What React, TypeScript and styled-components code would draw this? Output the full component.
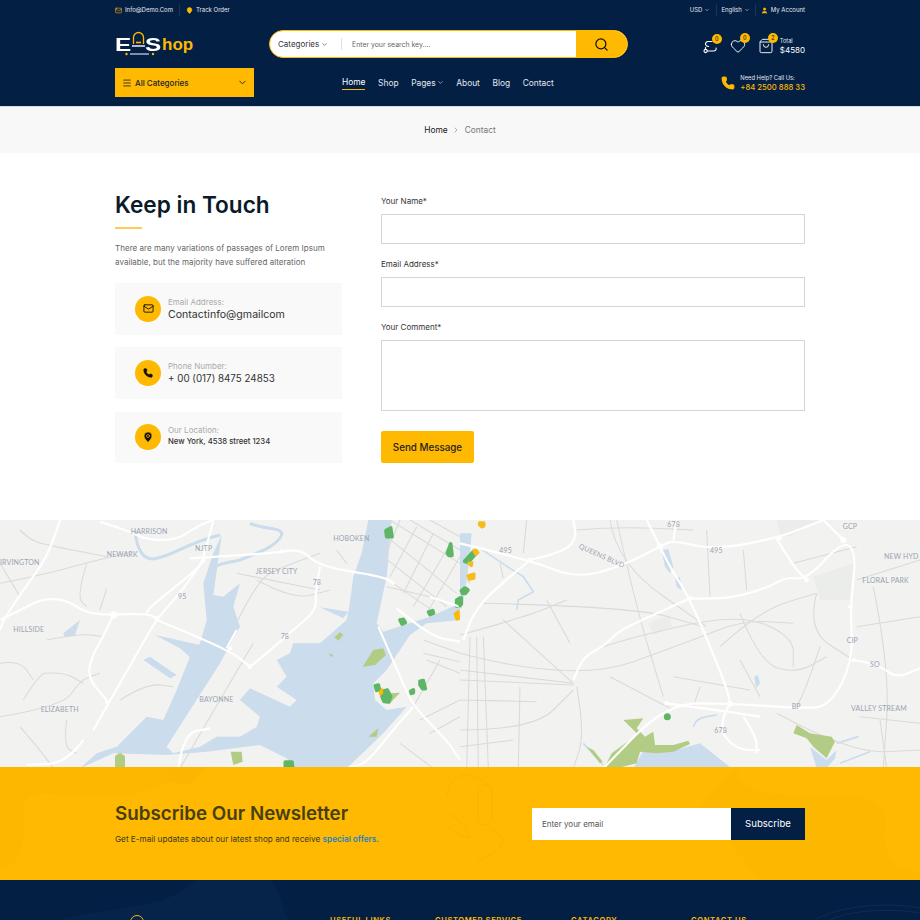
import { FC } from "react";
import styled, { createGlobalStyle } from "styled-components";
import { ChevronDown, ChevronRight, Heart, Mail, MapPin, Menu, Phone, Search, ShoppingBag, User } from "lucide-react";

const FONT = "Inter, 'Noto Sans', sans-serif";
const NAVY = "#031f44";
const YELLOW = "#ffb900";

const GlobalStyle = createGlobalStyle`
  html, body {
    margin: 0;
    padding: 0;
    height: 920px;
    overflow: hidden;
    background: #fff;
    font-family: ${FONT};
  }
  * {
    box-sizing: border-box;
  }
`;

// rounds the corners of a traced road so it doesn't look like a polyline
const smooth = (d: string) =>
  d
    .split("M")
    .filter(Boolean)
    .map((part) => {
      const pts = part.split("L").map((p) => p.trim().split(/\s+/).map(Number));
      if (pts.length < 3) return `M${part}`;
      let out = `M${pts[0][0]} ${pts[0][1]}`;
      for (let i = 1; i < pts.length - 1; i++) {
        const mx = (pts[i][0] + pts[i + 1][0]) / 2;
        const my = (pts[i][1] + pts[i + 1][1]) / 2;
        out += `Q${pts[i][0]} ${pts[i][1]} ${mx} ${my}`;
      }
      const last = pts[pts.length - 1];
      return `${out}L${last[0]} ${last[1]}`;
    })
    .join("");

// traced from the map, coordinates are 3x so the groups below are scaled down
const westWater = [
  "M1105 0L1175 0L1160 170L1130 310L1150 335L1290 290L1380 250L1380 300L1280 310L1230 345L1160 450L1120 490L1125 540L1160 570L1220 560L1150 640L1040 745L240 745L290 700L350 680L440 590L490 600L530 510L570 410L600 370L620 300L610 190L640 100L665 45L640 225L670 230L720 190L700 260L720 320L660 430L500 680L520 700L600 680L650 650L720 650L770 620L780 590L720 540L750 505L870 560L890 540L830 500L860 470L830 420L870 400L880 370L960 370L1040 300L1048 260L1060 170L1085 100Z",
  "M465 345L600 375L570 412L540 385Z",
  "M430 420L450 410L530 465L510 475Z",
  "M190 340L240 300L225 345L195 352Z",
  "M960 262L1045 275L1030 295Z",
];
const westLand = "M240 745L340 700L500 705L620 695L780 675L860 715L885 745Z";
const westRivers = [
  "M405 30C410 90 430 125 470 115C520 105 560 70 660 45",
  "M750 10C790 30 850 20 845 45C830 80 770 100 720 120C680 130 650 130 635 150",
];
const westParks = [
  "M1088 440L1120 390L1150 385L1158 405L1125 435Z",
  "M1003 352L1020 337L1030 345L1015 362Z",
  "M345 745L345 708L360 698L375 708L375 745Z",
  "M692 695L725 695L728 725L700 735Z",
  "M1105 650L1135 625L1130 650Z",
  "M1165 520L1200 518L1170 550Z",
  "M985 400L1000 405L995 412Z",
];
const westGreens = [
  "M1158 32L1172 24L1176 50L1160 50Z",
  "M1342 100L1352 72L1356 106L1346 106Z",
  "M1200 300L1210 298L1216 308L1206 312Z",
  "M1286 276L1298 272L1300 280L1290 284Z",
  "M1126 497L1135 495L1138 508L1130 511Z",
  "M1150 514L1162 510L1172 530L1166 546L1152 544L1146 530Z",
  "M1232 514L1240 510L1240 518L1234 520Z",
  "M1260 484L1270 482L1276 506L1268 506L1260 494Z",
  "M856 726L876 726L878 745L856 745Z",
  "M1370 240L1380 234L1380 258L1370 258Z",
];
const westRoads = [
  "M180 0L150 100L70 210L10 300L0 330",
  "M0 300L60 270L130 235L200 240L260 280L340 285L440 280L470 295",
  "M300 5L380 30L440 60L530 60L590 20L640 0",
  "M640 0L610 120L590 150L450 260L440 280",
  "M610 120L550 210L470 295L400 420L320 560L280 630",
  "M570 115L830 100L900 85L960 140L1150 170L1180 190",
  "M960 140L945 220L950 270L880 330L800 400L750 440",
  "M470 300L680 385L750 440",
  "M680 385L710 330",
  "M340 285L310 350L280 400L260 470L320 540",
  "M1135 320L1200 470L1240 560L1340 660L1380 720",
  "M1240 560L1170 640L1100 730L1040 745",
  "M250 660L200 730L80 735",
  "M535 745L550 640L630 625",
  "M1190 265L1290 350L1380 365",
  "M1290 230L1380 260",
];
const westStreets = [
  "M0 190L130 165L270 125L400 95",
  "M60 30L90 60L140 75L320 110",
  "M0 130L30 180L60 230",
  "M260 130L230 230L260 260",
  "M320 205L300 270",
  "M140 360L240 340L310 350",
  "M0 590L190 560L240 480L300 460",
  "M130 460L190 455L250 490",
  "M70 540L100 490L130 460",
  "M60 620L120 690L160 745",
  "M360 540L440 490L520 500",
  "M200 600L190 680L230 700",
  "M0 430L60 420L100 480",
  "M700 330L770 180L850 140L960 100",
  "M770 180L880 240L990 210",
  "M710 160L960 210",
  "M540 745L700 470L760 370",
  "M1010 90L1040 130",
  "M1170 0L1380 130",
  "M1230 0L1380 90",
  "M1290 0L1380 50",
  "M1160 50L1370 220",
  "M1150 110L1340 260",
  "M1150 170L1310 280",
  "M1200 0L1150 120",
  "M1250 20L1170 170",
  "M1300 40L1210 220",
  "M1345 80L1240 260",
  "M1380 110L1280 280",
  "M1160 200L1290 230",
  "M1270 360L1380 400",
  "M1280 420L1380 460",
  "M1270 400L1380 425",
  "M1320 420L1240 560",
  "M1260 600L1380 540",
  "M1290 640L1380 590",
  "M1200 670L1300 745",
];
const westJunctions = [
  [340, 285, 11], [470, 295, 8], [610, 122, 7], [750, 440, 7], [690, 385, 6], [845, 92, 5], [320, 545, 6], [1180, 190, 5],
];
const eastWater = [
  "M0 40L35 40L30 100L20 180L5 265L0 265Z",
  "M605 90L625 88L640 140L630 160L615 140Z",
  "M645 170L660 172L665 210L650 200Z",
  "M883 470L893 465L900 490L888 505Z",
  "M520 745L550 692L640 692L720 670L815 745Z",
  "M1050 680L1100 720L1130 690L1125 715L1100 745L1070 745Z",
];
const eastRivers = [
  "M60 85L150 145L190 170L220 215L175 240L170 270",
  "M700 620C710 590 740 590 770 585",
  "M1130 670L1195 650",
  "M1140 730L1230 695",
  "M370 670L430 735",
];
const eastParks = [
  "M490 600L550 595L530 625L555 650L580 635L585 675L640 675L685 662L690 672L640 695L590 700L540 695L530 730L470 745L432 745L455 700L510 660L530 640Z",
  "M1000 640L1010 615L1050 640L1115 650L1125 665L1100 715L1060 680L1040 655Z",
  "M380 680L400 690L428 725L420 730Z",
];
const eastGreens = [
  "M14 124L40 95L46 102L24 128Z",
  "M4 212L15 204L24 210L16 220L8 220Z",
  "M0 236L4 234L4 252L0 256Z",
  "M617 590A5 5 0 1 0 627 590A5 5 0 1 0 617 590Z",
];
const eastAmber = [
  "M58 8L72 8L72 18L65 21L58 14Z",
  "M41 92L47 89L54 98L48 103Z",
  "M24 167L42 162L42 175L28 178Z",
  "M26 130L36 128L34 137Z",
];
const eastRoads = [
  "M0 70L210 120L350 175L480 140L600 80L640 60L760 90L950 55L1090 0",
  "M210 120L100 210L40 280L10 360",
  "M210 120L300 100L350 60L340 0",
  "M560 0L600 80L640 160L690 235L800 500L810 550",
  "M640 60L650 0",
  "M690 235L790 240L920 205L980 170L1040 180L1150 60L1190 100L1170 260L1180 420L1110 560L1020 565L810 550L620 550L430 745",
  "M950 55L1000 140L1040 180",
  "M1150 60L1090 0",
  "M690 235L570 290L480 330L430 380L370 410L340 480",
  "M1180 420L1250 430L1310 475L1380 445",
  "M810 550L770 620L830 690L900 690",
  "M850 590L890 650L890 700",
  "M620 550L770 570L900 590",
];
const eastStreets = [
  "M470 0L525 250L610 530",
  "M0 400L340 490L700 360L850 300L1000 310",
  "M0 450L340 490",
  "M0 480L340 495",
  "M70 250L520 260L730 320",
  "M0 345L200 290L320 240",
  "M130 300L340 490",
  "M260 240L330 370",
  "M430 380L520 350L840 280L1000 350L1000 440",
  "M450 470L640 570",
  "M640 470L870 510",
  "M840 280L900 430L1010 460L1100 410",
  "M780 380L900 270L1070 220",
  "M1080 380L1040 500L1010 560",
  "M1070 220L1040 330L1180 420",
  "M1000 130L1190 80",
  "M1190 320L1380 290",
  "M1200 590L1380 610",
  "M1190 180L1380 120",
  "M30 350L20 745",
  "M50 350L55 745",
  "M70 350L85 745",
  "M0 630L220 630L340 510",
  "M0 680L160 660",
  "M180 500L175 745",
  "M350 500L375 640L340 745",
  "M1260 600L1280 745",
  "M0 540L230 545",
  "M950 580L1170 700L1380 690",
  "M450 0L470 130L740 320",
  "M350 30L470 20L700 30",
  "M200 0L190 100",
  "M0 150L30 190M120 130L130 175",
  "M740 30L750 230",
  "M850 90L860 210",
  "M1240 200L1290 450L1270 745",
  "M720 500L700 560",
  "M840 420L900 530",
];
const eastBlocks = [
  "M565 310L630 285L635 320L580 345Z",
  "M1060 170L1180 130L1170 240L1080 240Z",
  "M950 0L1090 0L985 50L960 45Z",
];
const eastJunctions = [
  [210, 120, 7], [600, 78, 9], [690, 235, 7], [1150, 60, 9], [1040, 180, 7], [960, 55, 6], [810, 552, 9], [620, 550, 7], [1180, 420, 6], [1170, 260, 6],
];

const Roads: FC<{ items: string[]; junctions: number[][] }> = ({ items, junctions }) => (
  <>
    {items.map((d) => <path key={d} d={smooth(d)} fill="none" stroke="#fff" strokeWidth="6.5" strokeLinejoin="round" />)}
    {junctions.map(([x, y, r]) => <circle key={`${x}-${y}`} cx={x} cy={y} r={r} fill="#fff" />)}
  </>
);

const Streets: FC<{ items: string[] }> = ({ items }) => (
  <>
    {items.map((d) => <path key={d} d={smooth(d)} fill="none" stroke="#dadada" strokeWidth="3.2" />)}
  </>
);

const MapArt: FC = () => (
  <MapSvg viewBox="0 0 920 248" preserveAspectRatio="none">
    <defs>
      <filter id="soft" x="0" y="0" width="100%" height="100%">
        <feGaussianBlur stdDeviation="0.35" />
      </filter>
    </defs>
    <rect width="920" height="248" fill="#f2f2f1" />
    <g filter="url(#soft)">
      <g transform="scale(.33333)">
        {westWater.map((d) => <path key={d} d={d} fill="#cbdcec" />)}
        <path d={westLand} fill="#f2f2f1" />
        {westRivers.map((d) => <path key={d} d={d} fill="none" stroke="#cbdcec" strokeWidth="9" />)}
        <Streets items={westStreets} />
        {westParks.map((d) => <path key={d} d={d} fill="#b3cc85" />)}
        {westGreens.map((d) => <path key={d} d={d} fill="#5fb566" stroke="#5fb566" strokeWidth="11" strokeLinejoin="round" />)}
        <path d="M1135 515L1148 502L1150 520L1140 528Z" fill={YELLOW} />
        <path d="M1360 280L1378 268L1380 300L1368 302Z" fill={YELLOW} />
        <Roads items={westRoads} junctions={westJunctions} />
      </g>
      <g transform="translate(460 0) scale(.33333)">
        {eastBlocks.map((d) => <path key={d} d={d} fill="#ebedea" />)}
        {eastWater.map((d) => <path key={d} d={d} fill="#cbdcec" />)}
        {eastRivers.map((d) => <path key={d} d={d} fill="none" stroke="#cbdcec" strokeWidth="5" />)}
        <Streets items={eastStreets} />
        {eastParks.map((d) => <path key={d} d={d} fill="#b3cc85" />)}
        {eastGreens.map((d) => <path key={d} d={d} fill="#5fb566" stroke="#5fb566" strokeWidth="11" strokeLinejoin="round" />)}
        {eastAmber.map((d) => <path key={d} d={d} fill="#f5bd1f" stroke="#f5bd1f" strokeWidth="9" strokeLinejoin="round" />)}
        <Roads items={eastRoads} junctions={eastJunctions} />
      </g>
    </g>
    <g transform="scale(.33333)">
      <MapLabel x="392" y="42">HARRISON</MapLabel>
      <MapLabel x="320" y="112">NEWARK</MapLabel>
      <MapLabel x="585" y="93">NJTP</MapLabel>
      <MapLabel x="0" y="134">IRVINGTON</MapLabel>
      <MapLabel x="1000" y="62">HOBOKEN</MapLabel>
      <MapLabel x="767" y="161">JERSEY CITY</MapLabel>
      <MapLabel x="40" y="336">HILLSIDE</MapLabel>
      <MapLabel x="598" y="546">BAYONNE</MapLabel>
      <MapLabel x="122" y="576">ELIZABETH</MapLabel>
      <MapLabel x="534" y="236">95</MapLabel>
      <MapLabel x="938" y="196">78</MapLabel>
      <MapLabel x="842" y="358">78</MapLabel>
    </g>
    <g transform="translate(460 0) scale(.33333)">
      <MapLabel x="622" y="20">678</MapLabel>
      <MapLabel x="118" y="100">495</MapLabel>
      <MapLabel x="750" y="98">495</MapLabel>
      <MapLabel x="1148" y="26">GCP</MapLabel>
      <MapLabel x="1272" y="116">NEW HYD</MapLabel>
      <MapLabel x="1207" y="190">FLORAL PARK</MapLabel>
      <MapLabel x="1160" y="370">CIP</MapLabel>
      <MapLabel x="1230" y="440">SO</MapLabel>
      <MapLabel x="995" y="566">BP</MapLabel>
      <MapLabel x="1173" y="574">VALLEY STREAM</MapLabel>
      <MapLabel x="763" y="640">678</MapLabel>
      <MapLabel x="355" y="84" transform="rotate(24 355 84)">QUEENS BLVD</MapLabel>
    </g>
  </MapSvg>
);

const CompareIcon: FC = () => (
  <svg width="15" height="15" viewBox="0 0 15 15" fill="none" stroke="#fff" strokeWidth="1.1" strokeLinecap="round">
    <circle cx="2.6" cy="12" r="1.6" />
    <path d="M4.3 12h6.2c2 0 3-1.4 2.6-3" />
    <path d="M9 2.5H5.2C3.4 2.5 2.2 4 2.6 5.6c.3 1.3 1.6 1.9 3 1.9" />
    <path d="M2.5 8.5v1.6" />
  </svg>
);

const LogoBell: FC = () => (
  <LogoBellSvg width="13" height="16" viewBox="0 0 13 16" fill="none">
    <path d="M1.5 13V6.5a5 5 0 0 1 10 0V13" stroke={YELLOW} strokeWidth="1.3" />
    <path d="M4 11.5h5" stroke={YELLOW} strokeWidth="1.6" />
    <path d="M0 15h13" stroke="#fff" strokeWidth="1.4" />
  </LogoBellSvg>
);

const LogoUnderline: FC = () => (
  <LogoUnderlineSvg width="30" height="4" viewBox="0 0 30 4">
    <circle cx="1.5" cy="2" r="1.2" fill={YELLOW} />
    <path d="M5 2h19" stroke="#fff" strokeWidth="1" />
    <circle cx="28" cy="2" r="1.2" fill={YELLOW} />
  </LogoUnderlineSvg>
);

const NewsletterArt: FC = () => (
  <NewsletterSvg viewBox="0 0 920 113" preserveAspectRatio="none">
    <path d="M0 100C30 100 22 60 24 40C26 20 50 28 90 30C140 34 185 10 190 0L0 0Z" fill="#fcb701" />
    <path d="M165 0C170 22 190 25 205 0Z" fill="#fab601" />
    <path d="M735 0C745 30 770 25 790 28C830 30 890 20 885 60C880 90 900 105 920 105L920 113L760 113L700 40Z" fill="#fcb701" />
    <g fill="none" stroke="#f3b006" strokeWidth=".7">
      <path d="M447 30C448 8 472 -2 488 20" />
      <path d="M478 24C480 16 490 16 492 24L492 52C490 60 480 60 478 52Z" />
      <path d="M447 46C455 48 468 62 470 70C462 72 450 62 447 58" />
      <path d="M490 62C500 65 506 72 500 80C494 88 482 88 477 97" />
    </g>
  </NewsletterSvg>
);

const infoCards = [
  { key: "mail", label: "Email Address:", value: "Contactinfo@gmailcom", size: 10.6, weight: 400 },
  { key: "phone", label: "Phone Number:", value: "+ 00 (017) 8475 24853", size: 9.8, weight: 400 },
  { key: "pin", label: "Our Location:", value: "New York, 4538 street 1234", size: 7.7, weight: 500 },
];

const footerHeads = [
  { title: "USEFUL LINKS", left: 215 },
  { title: "CUSTOMER SERVICE", left: 320 },
  { title: "CATAGORY", left: 456 },
  { title: "CONTACT US", left: 576 },
];

export default function App() {
  return (
    <Page>
      <GlobalStyle />
      <Header>
        <Container>
          <TopBar>
            <TopGroup $gap={6}>
              <TopItem><Mail size={7} color={YELLOW} />Info@Demo.Com</TopItem>
              <TopSep />
              <TopItem><MapPin size={7} color={NAVY} fill={YELLOW} stroke={YELLOW} />Track Order</TopItem>
            </TopGroup>
            <TopGroup $gap={4.5}>
              <TopItem>USD<ChevronDown size={6} /></TopItem>
              <TopSep />
              <TopItem>English<ChevronDown size={6} /></TopItem>
              <TopSep />
              <TopItem><User size={7} color={YELLOW} fill={YELLOW} />My Account</TopItem>
            </TopGroup>
          </TopBar>
          <MiddleRow>
            <Logo>
              <LogoLetter>E</LogoLetter>
              <LogoBell />
              <LogoLetter>S</LogoLetter>
              <LogoHop>hop</LogoHop>
              <LogoUnderline />
            </Logo>
            <SearchBar>
              <SearchCategory>Categories<ChevronDown size={7} /></SearchCategory>
              <SearchInput placeholder="Enter your search key...." />
              <SearchButton><Search size={15} color="#111" strokeWidth={2} /></SearchButton>
            </SearchBar>
            <HeaderIcons>
              <IconWrap><CompareIcon /><Badge>0</Badge></IconWrap>
              <IconWrap><Heart size={16} color="#fff" strokeWidth={1.4} /><Badge>0</Badge></IconWrap>
              <IconWrap><ShoppingBag size={16} color="#fff" strokeWidth={1.4} /><Badge>2</Badge></IconWrap>
              <CartTotal>
                <small>Total</small>
                <span>$4580</span>
              </CartTotal>
            </HeaderIcons>
          </MiddleRow>
          <BottomRow>
            <AllCategories>
              <Menu size={10} />
              <span>All Categories</span>
              <ChevronDown size={11} />
            </AllCategories>
            <Nav>
              <NavLink $active>Home</NavLink>
              <NavLink>Shop</NavLink>
              <NavLink>Pages<ChevronDown size={7} /></NavLink>
              <NavLink>About</NavLink>
              <NavLink>Blog</NavLink>
              <NavLink>Contact</NavLink>
            </Nav>
            <HelpBox>
              <Phone size={14} color={YELLOW} fill={YELLOW} />
              <HelpText>
                <small>Need Help? Call Us:</small>
                <span>+84 2500 888 33</span>
              </HelpText>
            </HelpBox>
          </BottomRow>
        </Container>
      </Header>

      <Breadcrumb>
        <CrumbHome>Home</CrumbHome>
        <ChevronRight size={8} color="#888" />
        <CrumbCurrent>Contact</CrumbCurrent>
      </Breadcrumb>

      <ContactSection>
        <ContactGrid>
          <div>
            <Title>Keep in Touch</Title>
            <TitleRule />
            <Intro>
              There are many variations of passages of Lorem Ipsum
              <br />
              available, but the majority have suffered alteration
            </Intro>
            <CardList>
              {infoCards.map((card) => (
                <InfoCard key={card.key}>
                  <InfoIcon>
                    {card.key === "mail" && <Mail size={11} color="#111" />}
                    {card.key === "phone" && <Phone size={10} color="#111" fill="#111" />}
                    {card.key === "pin" && <MapPin size={12} color={YELLOW} fill="#111" strokeWidth={1.4} />}
                  </InfoIcon>
                  <InfoText $small={card.size < 9}>
                    <InfoLabel>{card.label}</InfoLabel>
                    <InfoValue $size={card.size} $weight={card.weight}>{card.value}</InfoValue>
                  </InfoText>
                </InfoCard>
              ))}
            </CardList>
          </div>
          <Form>
            <FieldLabel>Your Name*</FieldLabel>
            <TextField />
            <FieldLabel>Email Address*</FieldLabel>
            <TextField />
            <FieldLabel>Your Comment*</FieldLabel>
            <CommentField />
            <SendButton type="button">Send Message</SendButton>
          </Form>
        </ContactGrid>
      </ContactSection>

      <MapSection>
        <MapArt />
      </MapSection>

      <Newsletter>
        <NewsletterArt />
        <NewsletterInner>
          <div>
            <NewsTitle>Subscribe Our Newsletter</NewsTitle>
            <NewsText>
              Get E-mail updates about our latest shop and receive <strong>special offers.</strong>
            </NewsText>
          </div>
          <NewsForm>
            <NewsInput placeholder="Enter your email" />
            <NewsButton type="button">Subscribe</NewsButton>
          </NewsForm>
        </NewsletterInner>
      </Newsletter>

      <Footer>
        <FooterWave viewBox="0 0 920 40" preserveAspectRatio="none">
          <path d="M60 40C110 25 170 30 195 0L270 0C285 15 280 30 290 40Z" fill="#0a2750" opacity=".5" />
          <g fill="none" stroke="#12305a" strokeWidth=".7">
            <path d="M815 40C840 25 890 22 920 28" />
            <path d="M830 40C850 30 890 28 920 33" />
          </g>
        </FooterWave>
        <FooterInner>
          <FooterLogoMark />
          {footerHeads.map((head) => (
            <FooterHead key={head.title} $left={head.left}>{head.title}</FooterHead>
          ))}
        </FooterInner>
      </Footer>
    </Page>
  );
}

const Page = styled.div`
  width: 920px;
  height: 920px;
  overflow: hidden;
  color: #222;
`;

const Container = styled.div`
  width: 690px;
  margin: 0 auto;
`;

const Header = styled.header`
  height: 107px;
  background: ${NAVY};
  border-bottom: 1px solid #d8dbe0;
`;

const TopBar = styled.div`
  display: flex;
  justify-content: space-between;
  align-items: center;
  height: 20px;
`;

const TopGroup = styled.div<{ $gap: number }>`
  display: flex;
  align-items: center;
  gap: ${(p) => p.$gap}px;
`;

const TopItem = styled.span`
  display: flex;
  align-items: center;
  gap: 2px;
  font-size: 6px;
  line-height: 8px;
  color: #e3e7ee;

  svg:first-child {
    margin-right: 1px;
  }
`;

const TopSep = styled.i`
  display: block;
  width: 1px;
  height: 12px;
  background: #17345c;
`;

const MiddleRow = styled.div`
  display: flex;
  align-items: center;
  height: 48px;
`;

const Logo = styled.div`
  position: relative;
  display: flex;
  align-items: flex-end;
  width: 154px;
  height: 28px;
  margin-top: -1px;
`;

const LogoBellSvg = styled.svg`
  flex: none;
  margin-bottom: 11px;
`;

const LogoUnderlineSvg = styled.svg`
  position: absolute;
  left: 10px;
  bottom: 2px;
`;

const LogoLetter = styled.span`
  font-family: "Liberation Sans", sans-serif;
  font-weight: 700;
  font-size: 18px;
  line-height: 18px;
  color: #fff;
  margin-bottom: 4px;
  transform: scaleX(1.35);
  transform-origin: left center;
  width: 17px;
`;

const LogoHop = styled.span`
  font-family: "Liberation Sans", sans-serif;
  font-weight: 700;
  font-size: 17px;
  line-height: 18px;
  color: ${YELLOW};
  margin-bottom: 4px;
`;

const SearchBar = styled.div`
  display: flex;
  align-items: stretch;
  width: 359px;
  height: 28px;
  background: #fff;
  border: 1px solid ${YELLOW};
  border-radius: 14px;
  overflow: hidden;
`;

const SearchCategory = styled.div`
  display: flex;
  align-items: center;
  gap: 2px;
  width: 72px;
  padding-left: 8px;
  font-size: 8px;
  color: #333;
  position: relative;

  &::after {
    content: "";
    position: absolute;
    right: 0;
    top: 7px;
    bottom: 7px;
    width: 1px;
    background: #dde0e4;
  }
`;

const SearchInput = styled.input`
  flex: 1;
  min-width: 0;
  border: 0;
  outline: none;
  padding: 0 0 0 10px;
  font-family: ${FONT};
  font-size: 6.9px;

  &::placeholder {
    color: #666;
  }
`;

const SearchButton = styled.div`
  display: flex;
  align-items: center;
  justify-content: center;
  width: 51px;
  background: ${YELLOW};
`;

const HeaderIcons = styled.div`
  display: flex;
  align-items: center;
  margin-left: auto;
  gap: 12px;
  margin-top: 4px;
`;

const IconWrap = styled.div`
  position: relative;
  display: flex;
`;

const Badge = styled.b`
  position: absolute;
  top: -5px;
  right: -4px;
  width: 10px;
  height: 10px;
  border-radius: 50%;
  background: ${YELLOW};
  font-size: 5.5px;
  font-weight: 500;
  line-height: 10px;
  text-align: center;
  color: #222;
`;

const CartTotal = styled.div`
  display: flex;
  flex-direction: column;
  margin-left: -6px;
  color: #fff;

  small {
    font-size: 5.6px;
    line-height: 8px;
    color: #e3e7ee;
  }

  span {
    font-size: 8px;
    line-height: 11px;
  }
`;

const BottomRow = styled.div`
  display: flex;
  align-items: center;
  height: 29px;
`;

const AllCategories = styled.div`
  display: flex;
  align-items: center;
  width: 139px;
  height: 29px;
  padding: 0 6px 0 7px;
  background: ${YELLOW};
  color: #222;
  font-size: 8px;
  font-weight: 500;

  span {
    flex: 1;
    margin-left: 3px;
  }
`;

const Nav = styled.nav`
  display: flex;
  align-items: center;
  gap: 12.6px;
  margin-left: 88px;
`;

const NavLink = styled.a<{ $active?: boolean }>`
  display: flex;
  align-items: center;
  gap: 1px;
  font-size: 8.4px;
  line-height: 12px;
  color: ${(p) => (p.$active ? "#fff" : "#e3e7ee")};
  padding-bottom: ${(p) => (p.$active ? "1px" : "0")};
  border-bottom: ${(p) => (p.$active ? `1px solid ${YELLOW}` : "0")};
`;

const HelpBox = styled.div`
  display: flex;
  align-items: center;
  gap: 5px;
  margin-left: auto;
`;

const HelpText = styled.div`
  display: flex;
  flex-direction: column;

  small {
    font-size: 5.8px;
    line-height: 9px;
    color: #e3e7ee;
  }

  span {
    font-size: 7.7px;
    line-height: 11px;
    font-weight: 500;
    color: ${YELLOW};
  }
`;

const Breadcrumb = styled.div`
  display: flex;
  align-items: center;
  justify-content: center;
  gap: 4.5px;
  height: 46px;
  background: #f8f8f8;
`;

const CrumbHome = styled.span`
  font-size: 8.4px;
  color: #222;
`;

const CrumbCurrent = styled.span`
  font-size: 8.4px;
  color: #777;
`;

const ContactSection = styled.section`
  height: 367px;
`;

const ContactGrid = styled(Container)`
  display: grid;
  grid-template-columns: 227px 424px;
  gap: 39px;
  padding-top: 38px;
`;

const Title = styled.h1`
  margin: 0;
  font-size: 22.6px;
  line-height: 28px;
  font-weight: 600;
  color: #0b1a2b;
`;

const TitleRule = styled.div`
  width: 27px;
  height: 1.5px;
  margin-top: 8px;
  background: #ffcb55;
`;

const Intro = styled.p`
  margin: 12px 0 14px;
  font-size: 8px;
  line-height: 14px;
  letter-spacing: 0.03px;
  color: #666;
`;

const CardList = styled.div`
  display: flex;
  flex-direction: column;
  gap: 12px;
`;

const InfoCard = styled.div`
  display: flex;
  align-items: center;
  gap: 7px;
  height: 52px;
  padding-left: 20px;
  background: #f9f9f9;

  &:last-child {
    height: 51px;
    margin-top: 1px;
  }
`;

const InfoIcon = styled.div`
  display: flex;
  align-items: center;
  justify-content: center;
  width: 26px;
  height: 26px;
  border-radius: 50%;
  background: ${YELLOW};
`;

const InfoText = styled.div<{ $small: boolean }>`
  padding-top: ${(p) => (p.$small ? 0 : 2)}px;
  padding-bottom: ${(p) => (p.$small ? 2 : 0)}px;
`;

const InfoLabel = styled.div`
  font-size: 8px;
  line-height: 11px;
  color: #aaa;
`;

const InfoValue = styled.div<{ $size: number; $weight: number }>`
  font-size: ${(p) => p.$size}px;
  line-height: ${(p) => (p.$size < 9 ? 11 : 14)}px;
  font-weight: ${(p) => p.$weight};
  color: #333;
`;

const Form = styled.form`
  display: flex;
  flex-direction: column;
  align-items: flex-start;
  padding-top: 5px;
`;

const FieldLabel = styled.label`
  display: block;
  font-size: 8px;
  line-height: 12px;
  margin-bottom: 7px;
  color: #333;
  margin-top: -1px;
`;

const TextField = styled.input`
  display: block;
  width: 100%;
  height: 30px;
  margin-bottom: 15px;
  padding: 0 8px;
  border: 1px solid #d3d5d8;
  outline: none;
  background: #fff;
`;

const CommentField = styled.textarea`
  display: block;
  width: 100%;
  height: 71px;
  margin: 0 0 20px;
  padding: 8px;
  border: 1px solid #d3d5d8;
  outline: none;
  resize: none;
  background: #fff;
`;

const SendButton = styled.button`
  width: 93px;
  height: 32px;
  border: 0;
  border-radius: 2px;
  background: ${YELLOW};
  color: #222;
  font-family: ${FONT};
  font-size: 9.8px;
  font-weight: 500;
`;

const MapSection = styled.section`
  height: 247px;
  overflow: hidden;
`;

const MapSvg = styled.svg`
  display: block;
  width: 920px;
  height: 248px;
`;

const MapLabel = styled.text`
  font-family: Lato, sans-serif;
  font-size: 21px;
  letter-spacing: 0.5px;
  fill: #9aa3b2;
`;

const Newsletter = styled.section`
  position: relative;
  height: 113px;
  background: ${YELLOW};
`;

const NewsletterSvg = styled.svg`
  position: absolute;
  inset: 0;
  width: 100%;
  height: 100%;
`;

const NewsletterInner = styled(Container)`
  position: relative;
  display: flex;
  justify-content: space-between;
  align-items: center;
  height: 100%;
`;

const NewsTitle = styled.h2`
  margin: 0 0 7px;
  font-size: 18.8px;
  line-height: 24px;
  font-weight: 600;
  color: #463f0e;
`;

const NewsText = styled.p`
  margin: 0;
  font-size: 8.2px;
  line-height: 12px;
  color: #3a3a24;

  strong {
    font-weight: 600;
    color: #1b80c6;
  }
`;

const NewsForm = styled.div`
  display: flex;
  height: 32px;
  width: 273px;
`;

const NewsInput = styled.input`
  flex: 1;
  min-width: 0;
  border: 0;
  outline: none;
  padding: 0 10px;
  font-family: ${FONT};
  font-size: 8px;
  background: #fff;

  &::placeholder {
    color: #555;
  }
`;

const NewsButton = styled.button`
  width: 74px;
  border: 0;
  background: ${NAVY};
  color: #fff;
  font-family: ${FONT};
  font-size: 9.6px;
`;

const Footer = styled.footer`
  position: relative;
  height: 40px;
  overflow: hidden;
  background: ${NAVY};
`;

const FooterWave = styled.svg`
  position: absolute;
  inset: 0;
  width: 100%;
  height: 100%;
`;

const FooterInner = styled(Container)`
  position: relative;
  height: 100%;
`;

const FooterLogoMark = styled.i`
  position: absolute;
  left: 15px;
  top: 35px;
  width: 14px;
  height: 14px;
  border: 1.5px solid ${YELLOW};
  border-radius: 50%;
`;

const FooterHead = styled.div<{ $left: number }>`
  position: absolute;
  left: ${(p) => p.$left}px;
  top: 36px;
  font-size: 7.6px;
  line-height: 10px;
  font-weight: 600;
  letter-spacing: 0.6px;
  white-space: nowrap;
  color: ${YELLOW};
`;
